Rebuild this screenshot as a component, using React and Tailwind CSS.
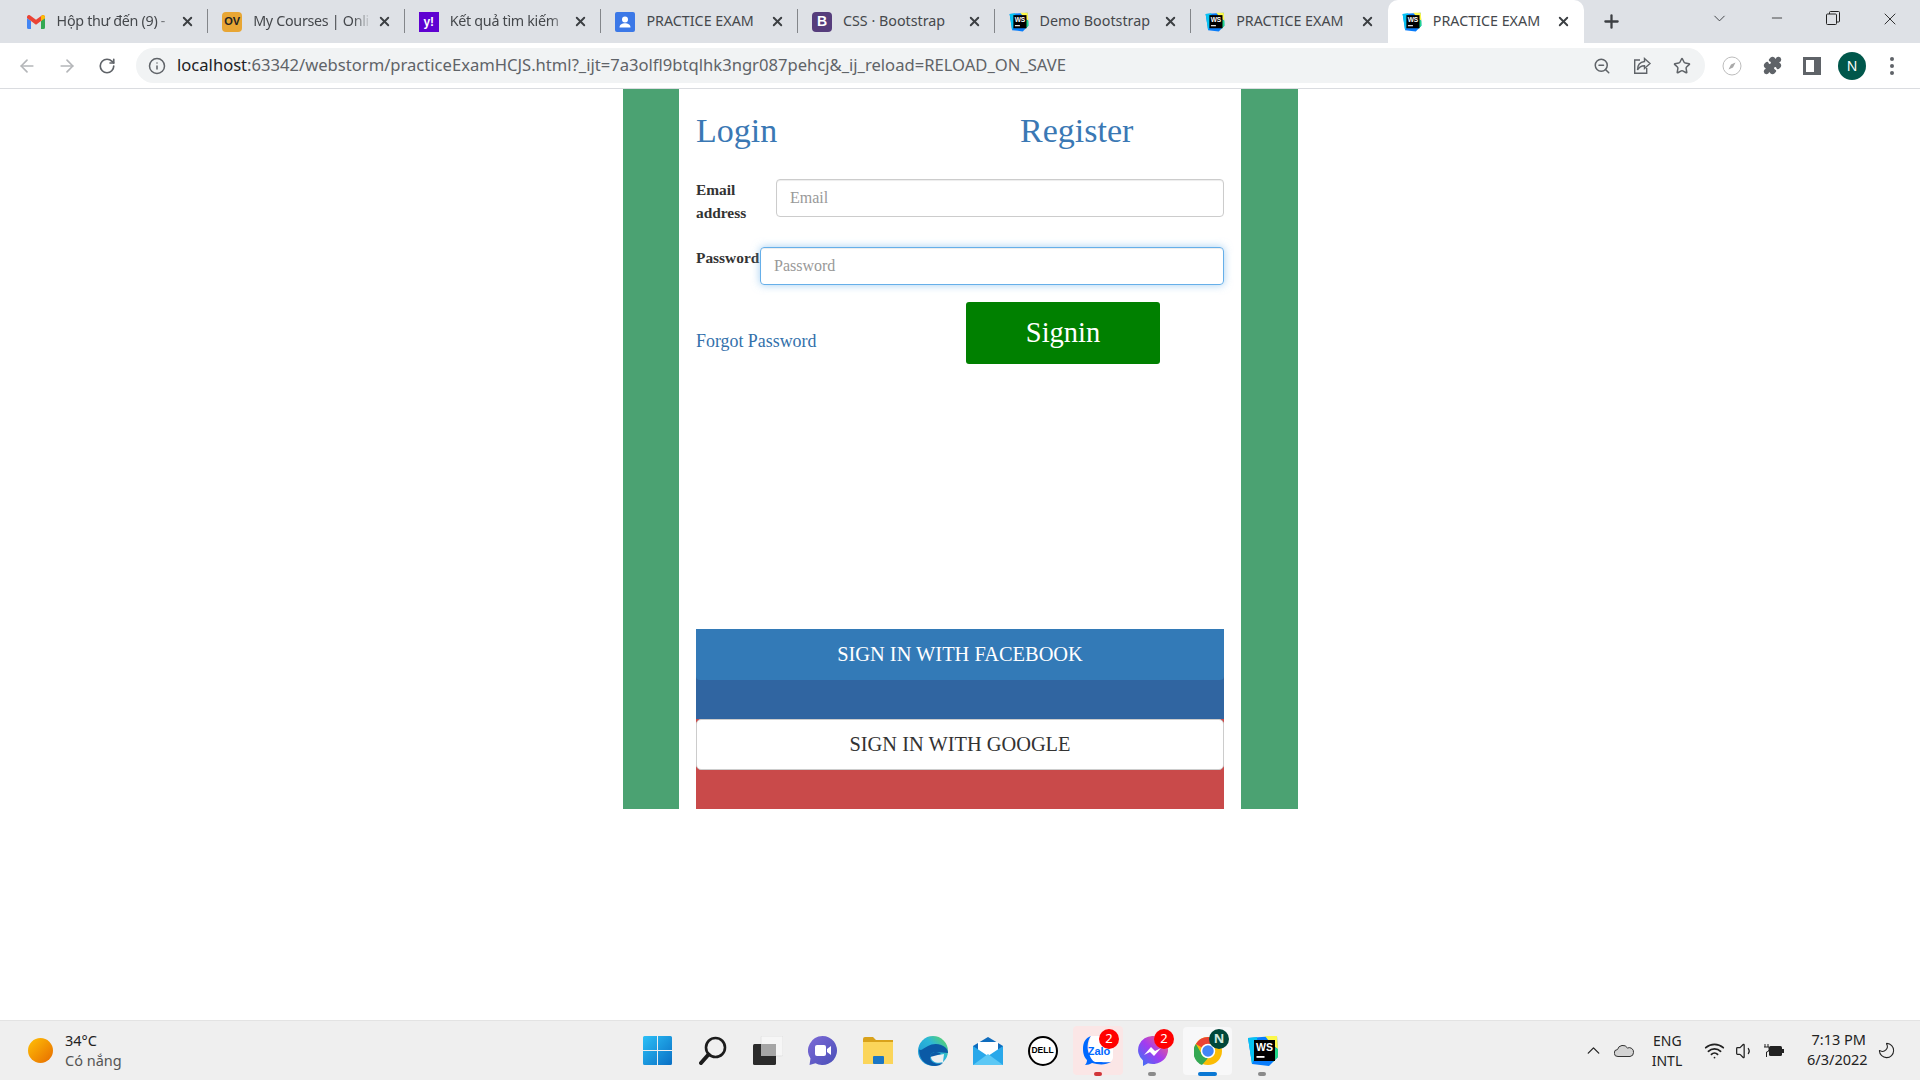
import { ArrowLeft, ArrowRight, RotateCw, Info, ZoomOut, Star, Puzzle, X, Plus, ChevronDown, Minus, ChevronUp, Wifi, Volume1, Moon } from 'lucide-react'

const UI_FONT = "font-['Noto_Sans',sans-serif]"

function Gmail() {
  return (
    <svg width="18" height="14" viewBox="0 0 18 14">
      <path d="M0 3v9.500A1.500 1.500 0 0 0 1.500 14H4V6z" fill="#4285f4" />
      <path d="M14 6v8h2.500A1.500 1.500 0 0 0 18 12.500V3z" fill="#34a853" />
      <path d="M0 3l4 3 5 3.800L14 6l4-3V2a2 2 0 0 0-3.200-1.600L9 4.800 3.200.4A2 2 0 0 0 0 2z" fill="#ea4335" />
      <path d="M14 1.200V6l4-3V2a2 2 0 0 0-3.200-1.600z" fill="#fbbc04" />
    </svg>
  )
}

function OvIcon() {
  return (
    <div className="w-[20px] h-[20px] rounded-[4px] bg-[#e8a634] flex items-center justify-center text-[11px] font-bold text-[#222] font-['Liberation_Sans',sans-serif]">
      OV
    </div>
  )
}

function YahooIcon() {
  return (
    <div className="w-[20px] h-[20px] bg-[#5f01d1] flex items-center justify-center text-[12px] font-bold text-white font-['Liberation_Sans',sans-serif]">
      y!
    </div>
  )
}

function ContactIcon() {
  return (
    <svg width="20" height="20" viewBox="0 0 20 20">
      <rect width="20" height="20" rx="2" fill="#3b78e7" />
      <circle cx="10" cy="7.500" r="3" fill="#fff" />
      <path d="M4.500 15.500c0-3 3-4.200 5.500-4.200s5.500 1.200 5.500 4.200z" fill="#fff" />
    </svg>
  )
}

function BootstrapIcon() {
  return (
    <div className="w-[20px] h-[20px] rounded-[4px] bg-[#563d7c] flex items-center justify-center text-[14px] font-bold text-white font-['Liberation_Sans',sans-serif]">
      B
    </div>
  )
}

function WsIcon({ size = 22 }) {
  return (
    <svg width={size} height={size} viewBox="0 0 32 32">
      <path d="M1 3l29-2 1 21-9 9-17-2z" fill="#087cfa" />
      <path d="M1 3l9-1 1 14-6 13z" fill="#07c3f2" />
      <path d="M18 1l12 0 1 13-6-4z" fill="#fcf84a" />
      <path d="M26 12l5 2v8l-5 5z" fill="#21d789" />
      <rect x="7" y="5" width="21" height="21" fill="#000" />
      <text x="17.500" y="15.500" textAnchor="middle" fontSize="10.500" fontWeight="700" fill="#fff" fontFamily="Liberation Sans">WS</text>
      <rect x="9.500" y="21" width="8" height="1.800" fill="#fff" />
    </svg>
  )
}

function Tab({ icon, title, active, fade, last }) {
  return (
    <div className={`relative w-[196.6px] h-[43px] flex items-center pl-[14px] pr-[14px] ${active ? 'bg-white rounded-t-[10px]' : ''}`}>
      <div className="w-[20px] flex justify-center shrink-0">{icon}</div>
      <div className="ml-[11px] flex-1 pb-[2px]">
        <div
          className={`overflow-hidden whitespace-nowrap text-[14.3px] text-[#45484c] ${fade ? 'w-[118px] tracking-[-0.3px] [mask-image:linear-gradient(to_right,black_85%,transparent_100%)]' : 'w-[115px]'}`}
        >
          {title}
        </div>
      </div>
      <X size={15} strokeWidth={3} className="shrink-0 -mr-[1px] text-[#3c3f43]" />
      {!active && !last && <div className="absolute right-0 top-[9px] h-[24px] w-px bg-[#83868a]" />}
    </div>
  )
}

function TabStrip() {
  return (
    <div className="h-[43px] bg-[#dee1e6] flex pl-[11.6px] items-start">
      <Tab icon={<Gmail />} title="Hộp thư đến (9) -" fade />
      <Tab icon={<OvIcon />} title="My Courses | Onli" fade />
      <Tab icon={<YahooIcon />} title="Kết quả tìm kiếm" fade />
      <Tab icon={<ContactIcon />} title="PRACTICE EXAM" />
      <Tab icon={<BootstrapIcon />} title="CSS · Bootstrap" />
      <Tab icon={<WsIcon />} title="Demo Bootstrap" />
      <Tab icon={<WsIcon />} title="PRACTICE EXAM" last />
      <Tab icon={<WsIcon />} title="PRACTICE EXAM" active />
      <Plus size={21} strokeWidth={2.6} className="ml-[17px] mt-[11px] text-[#3c3f43]" />
      <ChevronDown size={19} strokeWidth={1.2} className="ml-[88px] mt-[9px] text-[#3c3f43]" />
      <Minus size={16} strokeWidth={1.2} className="ml-[40px] mt-[10px] text-[#222]" />
      <svg width="14" height="14" viewBox="0 0 14 14" fill="none" stroke="#222" className="ml-[41px] mt-[11px]">
        <rect x="0.500" y="3" width="10" height="10.500" rx="1" />
        <path d="M3.500 3V1.500a1 1 0 0 1 1-1h8a1 1 0 0 1 1 1V10a1 1 0 0 1-1 1H11" />
      </svg>
      <X size={20} strokeWidth={1.1} className="ml-[40px] mt-[9px] text-[#222]" />
    </div>
  )
}

function ToolBox({ children }) {
  return <div className="w-[40px] h-[35px] flex items-center justify-center shrink-0">{children}</div>
}

function Toolbar() {
  return (
    <div className="h-[46px] bg-white border-b border-[#dadce0] flex items-center pl-[7px]">
      <ToolBox><ArrowLeft size={20} className="text-[#b4b6b9]" /></ToolBox>
      <ToolBox><ArrowRight size={20} className="text-[#b4b6b9]" /></ToolBox>
      <ToolBox><RotateCw size={18} strokeWidth={2.2} className="text-[#5f6368]" /></ToolBox>
      <div className="ml-[9px] w-[1569px] h-[35px] rounded-full bg-[#f1f3f4] flex items-center pl-[12px] pr-[3px]">
        <Info size={18} className="text-[#5f6368] shrink-0" />
        <div className="ml-[11px] flex-1 text-[16.6px] whitespace-nowrap text-[#5f6368]">
          <span className="text-[#202124]">localhost</span>:63342/webstorm/practiceExamHCJS.html?_ijt=7a3olfl9btqlhk3ngr087pehcj&_ij_reload=RELOAD_ON_SAVE
        </div>
        <ToolBox><ZoomOut size={18} className="text-[#5f6368]" /></ToolBox>
        <ToolBox>
          <svg width="20" height="20" viewBox="0 0 20 20" fill="none" stroke="#5f6368" strokeWidth="1.400">
            <path d="M8 4H2.700v13.300h12V12" />
            <path d="M12.500 2.500L18 7.500l-5.500 5V9.700C9 9.700 7 11 5.500 14c0-5 2.500-8 7-8.500z" />
          </svg>
        </ToolBox>
        <ToolBox><Star size={18} className="text-[#5f6368]" /></ToolBox>
      </div>
      <div className="ml-[7px] flex items-center">
        <ToolBox>
          <svg width="20" height="20" viewBox="0 0 20 20">
            <circle cx="10" cy="10" r="9" fill="none" stroke="#bdbdbd" />
            <path d="M13.500 6.500L11 11.500 6.500 13.500 9 8.500z" fill="#a9a9a9" />
          </svg>
        </ToolBox>
        <ToolBox><Puzzle size={19} fill="#5f6368" className="text-[#5f6368]" /></ToolBox>
        <ToolBox>
          <div className="w-[18px] h-[18px] border-[3px] border-r-[7px] border-[#5f6368] bg-white" />
        </ToolBox>
        <ToolBox>
          <div className="w-[28px] h-[28px] rounded-full bg-[#00574b] text-white text-[14px] flex items-center justify-center">N</div>
        </ToolBox>
        <ToolBox>
          <div className="flex flex-col gap-[3px]">
            <div className="w-[4px] h-[4px] rounded-full bg-[#5f6368]" />
            <div className="w-[4px] h-[4px] rounded-full bg-[#5f6368]" />
            <div className="w-[4px] h-[4px] rounded-full bg-[#5f6368]" />
          </div>
        </ToolBox>
      </div>
    </div>
  )
}

function LoginPage() {
  return (
    <div className="h-[720px] bg-white flex justify-center font-['Liberation_Serif',serif] pl-px">
      <div className="w-[56px] bg-[#4ba272]" />
      <div className="w-[562px] px-[17px] pt-[23px] bg-white">
        <div className="flex text-[34px] leading-[37px] text-[#3a78b4]">
          <div className="w-[324px]">Login</div>
          <div>Register</div>
        </div>
        <div className="mt-[30px] flex">
          <label className="w-[80px] shrink-0 -mt-[1px] text-[15.4px] leading-[23px] font-bold text-[#333]">
            Email<br />address
          </label>
          <input
            placeholder="Email"
            className="flex-1 h-[38px] px-[13px] text-[16px] border border-[#ccc] rounded-[4px] outline-none placeholder:text-[#999] shadow-[inset_0_1px_1px_rgba(0,0,0,0.075)]"
          />
        </div>
        <div className="mt-[23px] flex">
          <label className="w-[64px] shrink-0 -mt-[1px] text-[15.4px] leading-[23px] font-bold text-[#333] whitespace-nowrap">
            Password
          </label>
          <input
            placeholder="Password"
            className="flex-1 h-[38px] px-[13px] text-[16px] border border-[#66afe9] rounded-[4px] outline-none placeholder:text-[#999] shadow-[inset_0_1px_1px_rgba(0,0,0,0.075),0_0_8px_rgba(102,175,233,0.6)]"
          />
        </div>
        <div className="mt-[17px] flex items-start">
          <a className="w-[270px] mt-[28px] text-[17.9px] leading-[23px] text-[#3370ab]">Forgot Password</a>
          <button className="w-[194px] h-[62px] bg-[#008000] rounded-[3px] text-white text-[28.5px]">Signin</button>
        </div>
        <div className="mt-[265px] bg-[#3065a1] pb-[39px]">
          <button className="w-full h-[51px] bg-[#337ab7] rounded-b-[4px] text-white text-[20.4px]">
            SIGN IN WITH FACEBOOK
          </button>
        </div>
        <div className="bg-[#c94a4a] pb-[39px]">
          <button className="w-full h-[51px] bg-white border border-[#ccc] rounded-[5px] text-[#333] text-[20.4px]">
            SIGN IN WITH GOOGLE
          </button>
        </div>
      </div>
      <div className="w-[57px] bg-[#4ba272]" />
    </div>
  )
}

function TaskIcon({ children, className = '', bar }) {
  return (
    <div className={`relative w-[55px] h-[60px] flex items-center justify-center shrink-0 ${className}`}>
      {children}
      {bar}
    </div>
  )
}

function Badge({ children, className = 'bg-[#f00] text-white' }) {
  return (
    <div className={`absolute top-[8px] right-[6px] w-[20px] h-[20px] rounded-full flex items-center justify-center text-[13px] ${className}`}>
      {children}
    </div>
  )
}

function Taskbar() {
  return (
    <div className={`h-[60px] bg-[#efefef] border-t border-[#e3e3e3] flex items-center ${UI_FONT}`}>
      <div className="w-[630px] shrink-0 flex items-center pl-[28px]">
        <div className="w-[25px] h-[25px] rounded-full bg-gradient-to-br from-[#ffc107] to-[#e56a00]" />
        <div className="ml-[12px] pb-[2px] text-[14.5px] leading-[20px] text-[#222]">
          34°C
          <div className="text-[#555]">Có nắng</div>
        </div>
      </div>
      <div className="flex items-center">
        <TaskIcon>
          <svg width="29" height="29" viewBox="0 0 29 29">
            <defs>
              <linearGradient id="win" x1="0" y1="0" x2="1" y2="1">
                <stop offset="0" stopColor="#2cc0f7" />
                <stop offset="1" stopColor="#0a6fc4" />
              </linearGradient>
            </defs>
            <path d="M0 1.500A1.500 1.500 0 0 1 1.500 0H14v14H0zM15 0h12.500A1.500 1.500 0 0 1 29 1.500V14H15zM0 15h14v14H1.500A1.500 1.500 0 0 1 0 27.500zM15 15h14v12.500a1.500 1.500 0 0 1-1.500 1.500H15z" fill="url(#win)" />
          </svg>
        </TaskIcon>
        <TaskIcon>
          <svg width="28" height="29" viewBox="0 0 28 29" fill="none" stroke="#1c1c1c">
            <circle cx="16.500" cy="11.500" r="9.500" strokeWidth="2.600" />
            <path d="M9.500 18.500L2 27" strokeWidth="4" strokeLinecap="round" />
          </svg>
        </TaskIcon>
        <TaskIcon>
          <svg width="30" height="29" viewBox="0 0 30 29">
            <rect x="8" y="0" width="22" height="20" rx="1.500" fill="#f6f6f6" stroke="#e2e2e2" />
            <rect x="0" y="8" width="23" height="21" rx="1.500" fill="#2b2b2b" />
            <rect x="8" y="8" width="15" height="12" fill="#a6a6a6" />
          </svg>
        </TaskIcon>
        <TaskIcon>
          <svg width="29" height="29" viewBox="0 0 29 29">
            <defs>
              <linearGradient id="meet" x1="0" y1="0" x2="1" y2="1">
                <stop offset="0" stopColor="#7d6ad6" />
                <stop offset="1" stopColor="#4a4fb8" />
              </linearGradient>
            </defs>
            <path d="M14.500 0a14.500 14.500 0 1 1-7 27.200L1.500 29l1-6.500A14.500 14.500 0 0 1 14.500 0z" fill="url(#meet)" />
            <rect x="7" y="9" width="11" height="11" rx="2" fill="#fff" />
            <path d="M19 13l4-3v9l-4-3z" fill="#fff" />
          </svg>
        </TaskIcon>
        <TaskIcon>
          <svg width="30" height="27" viewBox="0 0 30 27">
            <path d="M0 2a2 2 0 0 1 2-2h8l3 3h17v5H0z" fill="#d9a21b" />
            <path d="M0 5h30v22H0z" fill="#fbd55a" />
            <rect x="10" y="19" width="11" height="8" rx="1" fill="#1b76c4" />
          </svg>
        </TaskIcon>
        <TaskIcon>
          <svg width="30" height="30" viewBox="0 0 30 30">
            <defs>
              <linearGradient id="edge" x1="0" y1="1" x2="1" y2="0">
                <stop offset="0" stopColor="#1a8fd6" />
                <stop offset="0.600" stopColor="#2bb7d8" />
                <stop offset="1" stopColor="#66d94f" />
              </linearGradient>
            </defs>
            <circle cx="15" cy="15" r="15" fill="url(#edge)" />
            <path d="M1 13C1 25 9 30 17 30c3 0 6-1 8-3-6 2-13 0-13-6 0-3 3-5 6-5 4 0 8 1 12 1 0-2-1-4-2-5-5-5-13-5-18-2-4 2-8 6-9 3z" fill="#0b5aa6" />
            <path d="M13 21c0 5 7 7 12 5l1-8c-3 1-8 1-13 0z" fill="#eceff0" />
            <path d="M12 21c0-3 3-5 6-5 2 0 4 1 5 2-3 1-7 2-11 3z" fill="#0b5aa6" />
          </svg>
        </TaskIcon>
        <TaskIcon>
          <svg width="30" height="28" viewBox="0 0 30 28">
            <path d="M0 9L15 0l15 9v19H0z" fill="#0f6cbd" />
            <path d="M5 5h20v10l-10 6-10-6z" fill="#fff" />
            <path d="M0 9l15 10 15-10v19H0z" fill="#29a8ea" />
            <path d="M0 28l15-11 15 11z" fill="#5cc8f5" />
          </svg>
        </TaskIcon>
        <TaskIcon>
          <div className="w-[30px] h-[30px] rounded-full border-[2.5px] border-black flex items-center justify-center bg-white text-[8.5px] font-bold text-black font-['Liberation_Sans',sans-serif]">
            DELL
          </div>
        </TaskIcon>
        <TaskIcon
          className="before:absolute before:left-[3px] before:right-[2px] before:top-[5px] before:bottom-[6px] before:rounded-[4px] before:bg-[#fbe6e6]"
          bar={<div className="absolute bottom-[5px] left-[24px] w-[8px] h-[4px] rounded-full bg-[#d13438]" />}
        >
          <svg width="30" height="32" viewBox="0 0 30 32" className="relative">
            <path d="M8 1C2 3 0 8 0 14c0 6 2 9 4 11 0 2-1 4-2 5 3 0 5-1 7-2 7 2 14 2 19-1-8 1-16 0-20-5C3 16 4 6 8 1z" fill="#0068ff" />
            <path d="M8 1h16c4 0 6 3 6 6v15c0 3-2 5-5 5H12C7 25 3 15 8 1z" fill="#fff" />
            <text x="16" y="20" textAnchor="middle" fontSize="11" fontWeight="700" fill="#0068ff" fontFamily="Liberation Sans">Zalo</text>
          </svg>
          <Badge>2</Badge>
        </TaskIcon>
        <TaskIcon bar={<div className="absolute bottom-[5px] left-[23px] w-[8px] h-[4px] rounded-full bg-[#8a8a8a]" />}>
          <svg width="30" height="30" viewBox="0 0 30 30">
            <defs>
              <linearGradient id="msg" x1="0" y1="1" x2="1" y2="0">
                <stop offset="0" stopColor="#2d7bf6" />
                <stop offset="0.500" stopColor="#a33bf0" />
                <stop offset="1" stopColor="#ff6a68" />
              </linearGradient>
            </defs>
            <path d="M15 0a15 14 0 1 1-5 27.200L5 30v-5.500A14.500 14 0 0 1 15 0z" fill="url(#msg)" />
            <path d="M6 19l7-8 4 4 6-3-7 8-4-4z" fill="#fff" />
          </svg>
          <Badge>2</Badge>
        </TaskIcon>
        <TaskIcon
          className="before:absolute before:left-[3px] before:right-[3px] before:top-[6px] before:bottom-[6px] before:rounded-[4px] before:bg-[#f8f8f9]"
          bar={<div className="absolute bottom-[5px] left-[18px] w-[19px] h-[4px] rounded-full bg-[#0a78d4]" />}
        >
          <svg width="28" height="28" viewBox="0 0 28 28" className="relative">
            <circle cx="14" cy="14" r="14" fill="#fbbc04" />
            <path d="M14 0a14 14 0 0 1 12.100 7H14a7 7 0 0 0-6.100 3.500L1.900 7A14 14 0 0 1 14 0z" fill="#ea4335" />
            <path d="M1.900 7L8 17.500A7 7 0 0 0 14 21l-6 7A14 14 0 0 1 1.900 7z" fill="#34a853" />
            <circle cx="14" cy="14" r="6.500" fill="#4285f4" stroke="#fff" strokeWidth="1.500" />
          </svg>
          <Badge className="bg-[#00473a] text-[#cfe8df] font-bold text-[11px]">N</Badge>
        </TaskIcon>
        <TaskIcon bar={<div className="absolute bottom-[5px] left-[23px] w-[8px] h-[4px] rounded-full bg-[#8a8a8a]" />}>
          <WsIcon size={32} />
        </TaskIcon>
      </div>
      <div className="flex items-center text-[#222] pl-[293px]">
        <ChevronUp size={21} strokeWidth={1.5} />
        <svg width="20" height="13" viewBox="0 0 20 13" className="ml-[10px]">
          <path d="M4 12.500a3.500 3.500 0 0 1-.5-7A5.500 5.500 0 0 1 13.500 4 4.300 4.300 0 0 1 19.500 8.500 4 4 0 0 1 16 12.500z" fill="#d3d3d3" stroke="#333" />
        </svg>
        <div className="ml-[19px] w-[28px] text-center text-[14px] leading-[20px]">
          ENG
          <div className="-mx-[2px]">INTL</div>
        </div>
        <Wifi size={21} className="ml-[23px]" />
        <Volume1 size={20} strokeWidth={1.5} className="ml-[10px]" />
        <svg width="20" height="16" viewBox="0 0 20 16" className="ml-[9px]">
          <rect x="5" y="3" width="13" height="10" rx="1.500" fill="#222" />
          <rect x="18" y="6" width="2" height="4" fill="#222" />
          <path d="M1 1v3M4 1v3M0 4h5v2.500A2.500 2.500 0 0 1 2.500 9v5" stroke="#222" fill="none" />
        </svg>
        <div className="ml-[23px] w-[59px] pb-[3px] text-right text-[14.5px] leading-[20px] whitespace-nowrap">
          7:13 PM
          <div>6/3/2022</div>
        </div>
        <Moon size={19} strokeWidth={1.3} className="ml-[11px] -scale-x-100" />
      </div>
    </div>
  )
}

export default function App() {
  return (
    <div className={`w-[1920px] h-[1080px] overflow-hidden bg-white flex flex-col ${UI_FONT}`}>
      <TabStrip />
      <Toolbar />
      <LoginPage />
      <div className="flex-1" />
      <Taskbar />
    </div>
  )
}
